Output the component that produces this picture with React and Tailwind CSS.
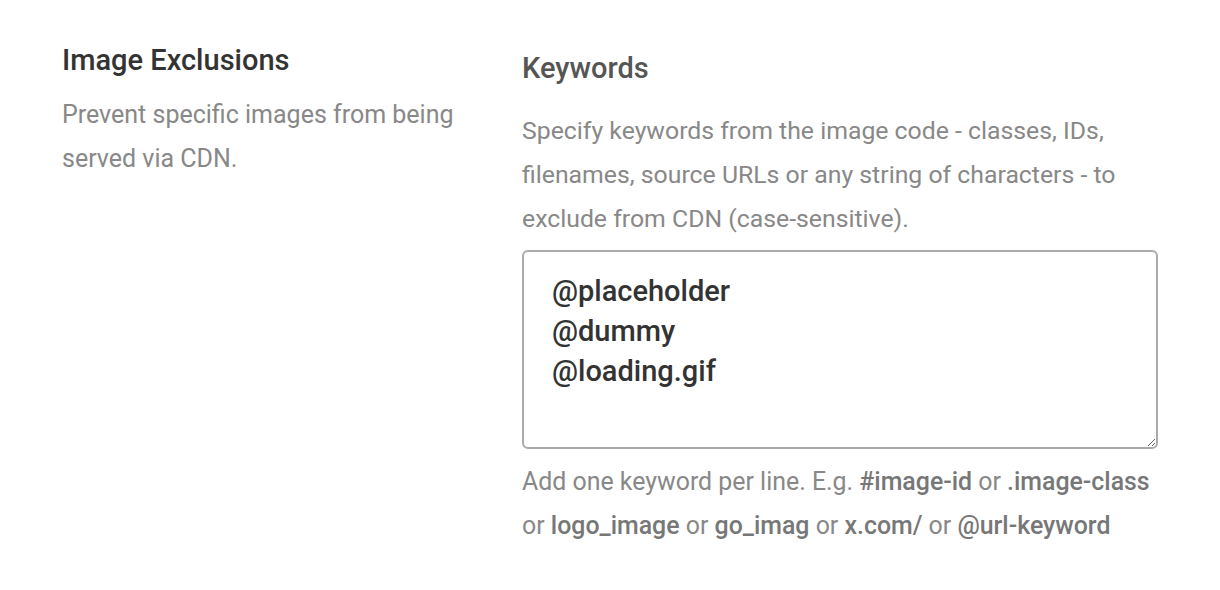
export default function App() {
    return (
        <div className="w-[1220px] h-[590px] bg-white font-['Roboto',sans-serif]">
            <div className="flex pt-[40px]">

                {/* Left: section label */}
                <div className="w-[522px] pl-[62px] pr-[60px] shrink-0">
                    <h2 className="text-[29px] leading-[40px] font-medium text-[#333333]">Image Exclusions</h2>
                    <p className="mt-[13px] text-[25px] leading-[44px] text-[#888888]">
                        Prevent specific images from being served via CDN.
                    </p>
                </div>

                {/* Right: keywords field */}
                <div className="w-[636px] shrink-0">
                    <h3 className="mt-[8px] text-[29px] leading-[40px] font-medium text-[#555555]">Keywords</h3>
                    <p className="mt-[21px] text-[24.8px] leading-[44px] text-[#888888]">
                        Specify keywords from the image code - classes, IDs, filenames, source URLs or any string of characters - to exclude from CDN (case-sensitive).
                    </p>
                    <textarea
                        className="mt-[9px] block w-[636px] h-[199px] border-2 border-[#aaaaaa] rounded-[6px] pl-[28px] pt-[19px] text-[29px] leading-[40px] font-medium text-[#333333] outline-none resize-y"
                        defaultValue={"@placeholder\n@dummy\n@loading.gif"}
                    />
                    <p className="mt-[11px] text-[24.9px] leading-[44px] text-[#888888]">
                        Add one keyword per line. E.g. <span className="font-medium text-[#777777]">#image-id</span> or <span className="font-medium text-[#777777]">.image-class</span> or <span className="font-medium text-[#777777]">logo_image</span> or <span className="font-medium text-[#777777]">go_imag</span> or <span className="font-medium text-[#777777]">x.com/</span> or <span className="font-medium text-[#777777]">@url-keyword</span>
                    </p>
                </div>

            </div>
        </div>
    );
}
